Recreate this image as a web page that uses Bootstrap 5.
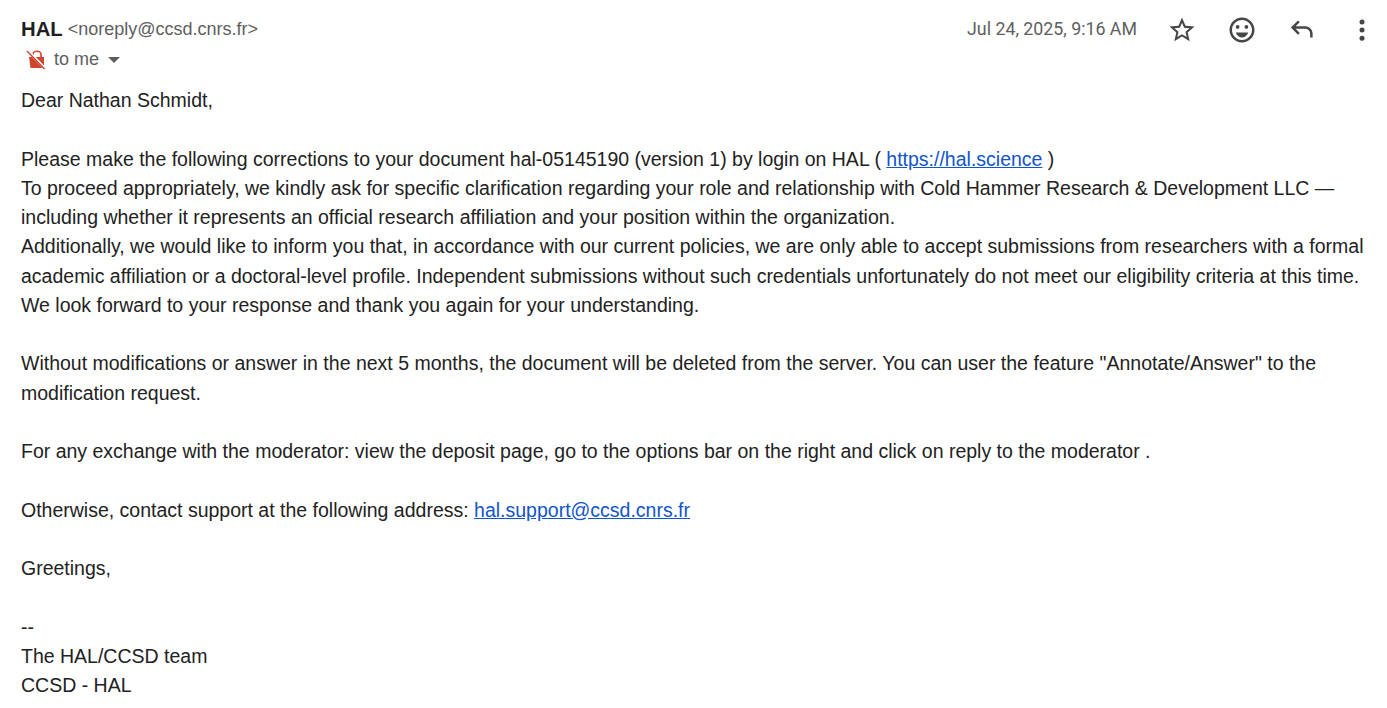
<!DOCTYPE html>
<html lang="en">
<head>
  <meta charset="UTF-8">
  <meta name="viewport" content="width=device-width, initial-scale=1.0">
  <title>HAL message</title>
  <link href="https://cdn.jsdelivr.net/npm/bootstrap@5.3.2/dist/css/bootstrap.min.css" rel="stylesheet">
  <style>
    html, body { height: 708px; overflow: hidden; }
    body { background: #fff; font-family: "Liberation Sans", Arial, sans-serif; color: #222; }
    .mail-wrap { padding: 16px 21px 0 21px; }
    .mail-head { height: 26px; }
    .sender-name { font-size: 20.3px; font-weight: 700; color: #1f1f1f; line-height: 26px; }
    .sender-addr { font-size: 18px; color: #5e5e5e; line-height: 26px; margin-left: 5px; }
    .mail-date { font-family: Roboto, sans-serif; font-size: 17.8px; color: #5e5e5e; line-height: 26px; margin-right: 30px; }
    .head-icon { width: 30px; height: 30px; display: block; color: #444746; margin-top: 2px; }
    .head-actions { gap: 30px; margin-right: -11px; }
    .to-row { height: 30px; margin-top: 2px; color: #5e5e5e; font-size: 18px; }
    .to-row svg { display: block; }
    .to-text { margin-left: 7px; margin-right: 9px; }
    .caret-down { width: 0; height: 0; border-left: 6.5px solid transparent; border-right: 6.5px solid transparent; border-top: 6.5px solid #5e5e5e; margin-top: 2px; }
    .mail-body { font-size: 19.5px; line-height: 29.25px; margin-top: 12px; color: #222; white-space: nowrap; }
    .mail-body a { color: #1155cc; }
  </style>
</head>
<body>
  <div class="mail-wrap">
    <div class="mail-head d-flex justify-content-between align-items-center">
      <div class="d-flex align-items-center">
        <span class="sender-name">HAL</span>
        <span class="sender-addr">&lt;noreply@ccsd.cnrs.fr&gt;</span>
      </div>
      <div class="d-flex align-items-center">
        <span class="mail-date">Jul 24, 2025, 9:16 AM</span>
        <div class="head-actions d-flex align-items-center">
          <!-- star -->
          <svg class="head-icon" viewBox="0 0 24 24" fill="currentColor"><path d="M22 9.24l-7.19-.62L12 2 9.19 8.63 2 9.24l5.46 4.73L5.82 21 12 17.27 18.18 21l-1.63-7.03L22 9.24zM12 15.4l-3.76 2.27 1-4.28-3.32-2.88 4.38-.38L12 6.1l1.71 4.04 4.38.38-3.32 2.88 1 4.28L12 15.4z"/></svg>
          <!-- emoji -->
          <svg class="head-icon" viewBox="0 0 24 24" fill="currentColor"><circle cx="15.5" cy="9.5" r="1.5"/><circle cx="8.5" cy="9.5" r="1.5"/><path d="M12 18c2.28 0 4.22-1.66 5-4H7c.78 2.34 2.72 4 5 4z"/><path d="M11.99 2C6.47 2 2 6.48 2 12s4.47 10 9.99 10C17.52 22 22 17.52 22 12S17.52 2 11.99 2zM12 20c-4.42 0-8-3.58-8-8s3.58-8 8-8 8 3.58 8 8-3.58 8-8 8z"/></svg>
          <!-- reply -->
          <svg class="head-icon" viewBox="0 0 24 24" fill="currentColor"><path d="M20.5 18h-2v-3c0-2.2-1.8-4-4-4H6.9l3.3 3.3-1.4 1.4L3.1 10l5.7-5.7 1.4 1.4L6.9 9h7.6c3.3 0 6 2.7 6 6z"/></svg>
          <!-- more -->
          <svg class="head-icon" viewBox="0 0 24 24" fill="currentColor"><circle cx="12" cy="5.5" r="2"/><circle cx="12" cy="12" r="2"/><circle cx="12" cy="18.5" r="2"/></svg>
        </div>
      </div>
    </div>
    <div class="to-row d-flex align-items-center">
      <svg width="26" height="26" viewBox="0 0 26 26">
        <path d="M12 11V8.5a4 3.2 0 0 1 8 0V11" fill="none" stroke="#d0452d" stroke-width="1.6"/>
        <path d="M8 11h15v11H9.5z" fill="#d0452d"/>
        <path d="M6.5 4.5l17.5 18" stroke="#fff" stroke-width="3"/>
        <path d="M6 5l17.5 18" stroke="#d0452d" stroke-width="1.4"/>
      </svg>
      <span class="to-text">to me</span>
      <span class="caret-down"></span>
    </div>
    <div class="mail-body">
      Dear Nathan Schmidt,<br>
      <br>
      Please make the following corrections to your document hal-05145190 (version 1) by login on HAL ( <a href="#">https://hal.science</a> )<br>
      To proceed appropriately, we kindly ask for specific clarification regarding your role and relationship with Cold Hammer Research &amp; Development LLC —<br>
      including whether it represents an official research affiliation and your position within the organization.<br>
      Additionally, we would like to inform you that, in accordance with our current policies, we are only able to accept submissions from researchers with a formal<br>
      academic affiliation or a doctoral-level profile. Independent submissions without such credentials unfortunately do not meet our eligibility criteria at this time.<br>
      We look forward to your response and thank you again for your understanding.<br>
      <br>
      Without modifications or answer in the next 5 months, the document will be deleted from the server. You can user the feature "Annotate/Answer" to the<br>
      modification request.<br>
      <br>
      For any exchange with the moderator: view the deposit page, go to the options bar on the right and click on reply to the moderator .<br>
      <br>
      Otherwise, contact support at the following address: <a href="#">hal.support@ccsd.cnrs.fr</a><br>
      <br>
      Greetings,<br>
      <br>
      --<br>
      The HAL/CCSD team<br>
      CCSD - HAL
    </div>
  </div>
  <script src="https://cdn.jsdelivr.net/npm/bootstrap@5.3.2/dist/js/bootstrap.bundle.min.js"></script>
</body>
</html>
